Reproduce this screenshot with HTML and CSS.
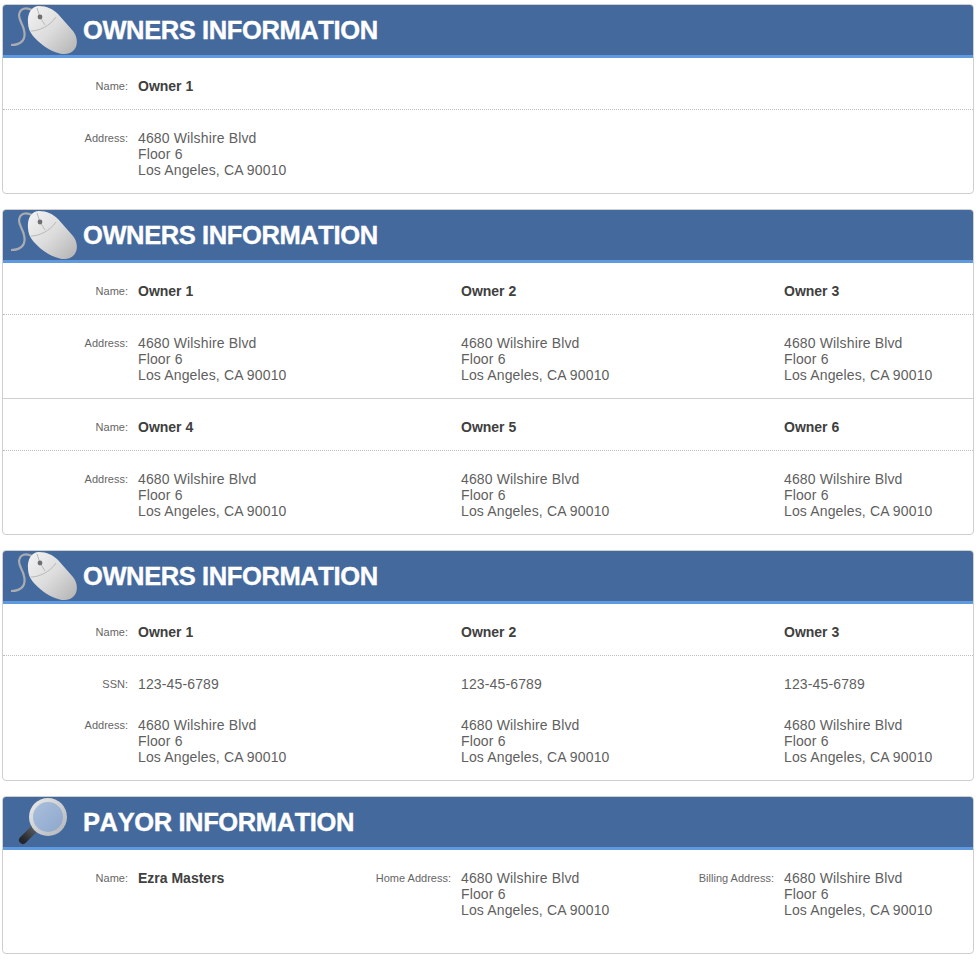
FILE: index.html
```html
<!DOCTYPE html>
<html lang="en">
<head>
<meta charset="utf-8">
<title>Owners Information</title>
<link rel="stylesheet" href="styles.css">
</head>
<body>
<svg class="defs" width="0" height="0" aria-hidden="true">
  <defs>
    <linearGradient id="mouseBody" x1="0" y1="0" x2="1" y2="1">
      <stop offset="0" stop-color="#f4f4f4"/>
      <stop offset="0.5" stop-color="#dcdcdc"/>
      <stop offset="1" stop-color="#b2b2b2"/>
    </linearGradient>
    <linearGradient id="lensFill" x1="0" y1="0" x2="1" y2="1">
      <stop offset="0" stop-color="#a9bfdc"/>
      <stop offset="1" stop-color="#8ea7cc"/>
    </linearGradient>
    <linearGradient id="ringFill" x1="0" y1="0" x2="1" y2="1">
      <stop offset="0" stop-color="#ececec"/>
      <stop offset="1" stop-color="#b0b3b8"/>
    </linearGradient>
    <linearGradient id="handleFill" x1="1" y1="0" x2="0" y2="1">
      <stop offset="0" stop-color="#5a5d63"/>
      <stop offset="1" stop-color="#24262b"/>
    </linearGradient>
    <symbol id="mouse" viewBox="0 0 76 50">
      <path d="M29 5C23 2 17 3 16 10C16 16 20 19 21 25C23 33 20 40 8 40" fill="none" stroke="#a9adb2" stroke-width="2.2"/>
      <path d="M25 18C24 8 29 1 36 1C44 1 50 4 55 9L70 26C75 32 75 41 71 45C67 50 59 50 52 47C44 44 36 38 30 31C27 27 25 23 25 18Z" fill="url(#mouseBody)"/>
      <path d="M28 26C36 26 47 21 53 12" fill="none" stroke="#b9b9b9" stroke-width="1"/>
      <path d="M34 3L37 12L42 20" fill="none" stroke="#b9b9b9" stroke-width="1"/>
      <circle cx="37" cy="12" r="2.4" fill="#6d6f72"/>
    </symbol>
    <symbol id="lens" viewBox="0 0 76 50">
      <path d="M32 31L20 43" stroke="url(#handleFill)" stroke-width="8" stroke-linecap="round" fill="none"/>
      <circle cx="45" cy="20" r="19" fill="url(#ringFill)"/>
      <circle cx="45" cy="20" r="15" fill="url(#lensFill)"/>
    </symbol>
  </defs>
</svg>

<section class="card">
  <header class="card-head">
    <svg class="head-icon"><use href="#mouse"/></svg>
    <h2 class="card-title">OWNERS INFORMATION</h2>
  </header>
  <div class="row row-name dotted">
    <div class="field"><span class="label">Name:</span><span class="value strong">Owner 1</span></div>
  </div>
  <div class="row row-address">
    <div class="field"><span class="label">Address:</span><span class="value">4680 Wilshire Blvd<br>Floor 6<br>Los Angeles, CA 90010</span></div>
  </div>
</section>

<section class="card">
  <header class="card-head">
    <svg class="head-icon"><use href="#mouse"/></svg>
    <h2 class="card-title">OWNERS INFORMATION</h2>
  </header>
  <div class="row row-name dotted">
    <div class="field"><span class="label">Name:</span><span class="value strong">Owner 1</span></div>
    <div class="field"><span class="label"></span><span class="value strong">Owner 2</span></div>
    <div class="field"><span class="label"></span><span class="value strong">Owner 3</span></div>
  </div>
  <div class="row row-address solid">
    <div class="field"><span class="label">Address:</span><span class="value">4680 Wilshire Blvd<br>Floor 6<br>Los Angeles, CA 90010</span></div>
    <div class="field"><span class="label"></span><span class="value">4680 Wilshire Blvd<br>Floor 6<br>Los Angeles, CA 90010</span></div>
    <div class="field"><span class="label"></span><span class="value">4680 Wilshire Blvd<br>Floor 6<br>Los Angeles, CA 90010</span></div>
  </div>
  <div class="row row-name dotted">
    <div class="field"><span class="label">Name:</span><span class="value strong">Owner 4</span></div>
    <div class="field"><span class="label"></span><span class="value strong">Owner 5</span></div>
    <div class="field"><span class="label"></span><span class="value strong">Owner 6</span></div>
  </div>
  <div class="row row-address">
    <div class="field"><span class="label">Address:</span><span class="value">4680 Wilshire Blvd<br>Floor 6<br>Los Angeles, CA 90010</span></div>
    <div class="field"><span class="label"></span><span class="value">4680 Wilshire Blvd<br>Floor 6<br>Los Angeles, CA 90010</span></div>
    <div class="field"><span class="label"></span><span class="value">4680 Wilshire Blvd<br>Floor 6<br>Los Angeles, CA 90010</span></div>
  </div>
</section>

<section class="card">
  <header class="card-head">
    <svg class="head-icon"><use href="#mouse"/></svg>
    <h2 class="card-title">OWNERS INFORMATION</h2>
  </header>
  <div class="row row-name dotted">
    <div class="field"><span class="label">Name:</span><span class="value strong">Owner 1</span></div>
    <div class="field"><span class="label"></span><span class="value strong">Owner 2</span></div>
    <div class="field"><span class="label"></span><span class="value strong">Owner 3</span></div>
  </div>
  <div class="row row-ssn">
    <div class="field"><span class="label">SSN:</span><span class="value">123-45-6789</span></div>
    <div class="field"><span class="label"></span><span class="value">123-45-6789</span></div>
    <div class="field"><span class="label"></span><span class="value">123-45-6789</span></div>
  </div>
  <div class="row row-address-tight">
    <div class="field"><span class="label">Address:</span><span class="value">4680 Wilshire Blvd<br>Floor 6<br>Los Angeles, CA 90010</span></div>
    <div class="field"><span class="label"></span><span class="value">4680 Wilshire Blvd<br>Floor 6<br>Los Angeles, CA 90010</span></div>
    <div class="field"><span class="label"></span><span class="value">4680 Wilshire Blvd<br>Floor 6<br>Los Angeles, CA 90010</span></div>
  </div>
</section>

<section class="card">
  <header class="card-head">
    <svg class="head-icon"><use href="#lens"/></svg>
    <h2 class="card-title">PAYOR INFORMATION</h2>
  </header>
  <div class="row row-payor">
    <div class="field"><span class="label">Name:</span><span class="value strong">Ezra Masters</span></div>
    <div class="field"><span class="label">Home Address:</span><span class="value">4680 Wilshire Blvd<br>Floor 6<br>Los Angeles, CA 90010</span></div>
    <div class="field"><span class="label">Billing Address:</span><span class="value">4680 Wilshire Blvd<br>Floor 6<br>Los Angeles, CA 90010</span></div>
  </div>
</section>
</body>
</html>
```
FILE: styles.css
```css
* { box-sizing: border-box; }
html, body { background: #fff; }
body {
  margin: 0;
  padding: 4px 5px 0 2px;
  font-family: "Liberation Sans", Arial, sans-serif;
  color: #555;
}
.defs { position: absolute; }
.card {
  border: 1px solid #cfcfcf;
  border-radius: 4px;
  margin-bottom: 15px;
  overflow: hidden;
  background: #fff;
}
.card-head {
  display: flex;
  align-items: center;
  height: 53px;
  background: #44699c;
  border-bottom: 3px solid #5f9ae0;
}
.head-icon {
  width: 76px;
  height: 50px;
  flex: none;
  margin-right: 4px;
}
.card-title {
  margin: 0;
  font-size: 25.5px;
  line-height: 50px;
  font-weight: 700;
  font-kerning: none;
  letter-spacing: -0.39px;
  color: #fff;
  -webkit-text-stroke: 0.4px #fff;
}
.row {
  display: grid;
  grid-template-columns: repeat(3, 323px);
  padding-left: 12px;
}
.row-name { height: 52px; padding-top: 20px; }
.row-address { height: 83px; padding-top: 20px; }
.row-address.solid { height: 84px; }
.row-ssn { height: 61px; padding-top: 20px; }
.row-address-tight { height: 63px; }
.row-payor { height: 103px; padding-top: 20px; }
.dotted { border-bottom: 1px dotted #bdbdbd; }
.solid { border-bottom: 1px solid #cfcfcf; }
.field { display: flex; align-items: flex-start; }
.label {
  width: 113px;
  flex: none;
  margin-right: 10px;
  text-align: right;
  font-size: 11px;
  line-height: 16px;
  color: #666;
}
.value {
  font-size: 14px;
  line-height: 16px;
  letter-spacing: 0.14px;
  color: #5f5f5f;
}
.strong { font-weight: 700; letter-spacing: 0; color: #404040; }
```
